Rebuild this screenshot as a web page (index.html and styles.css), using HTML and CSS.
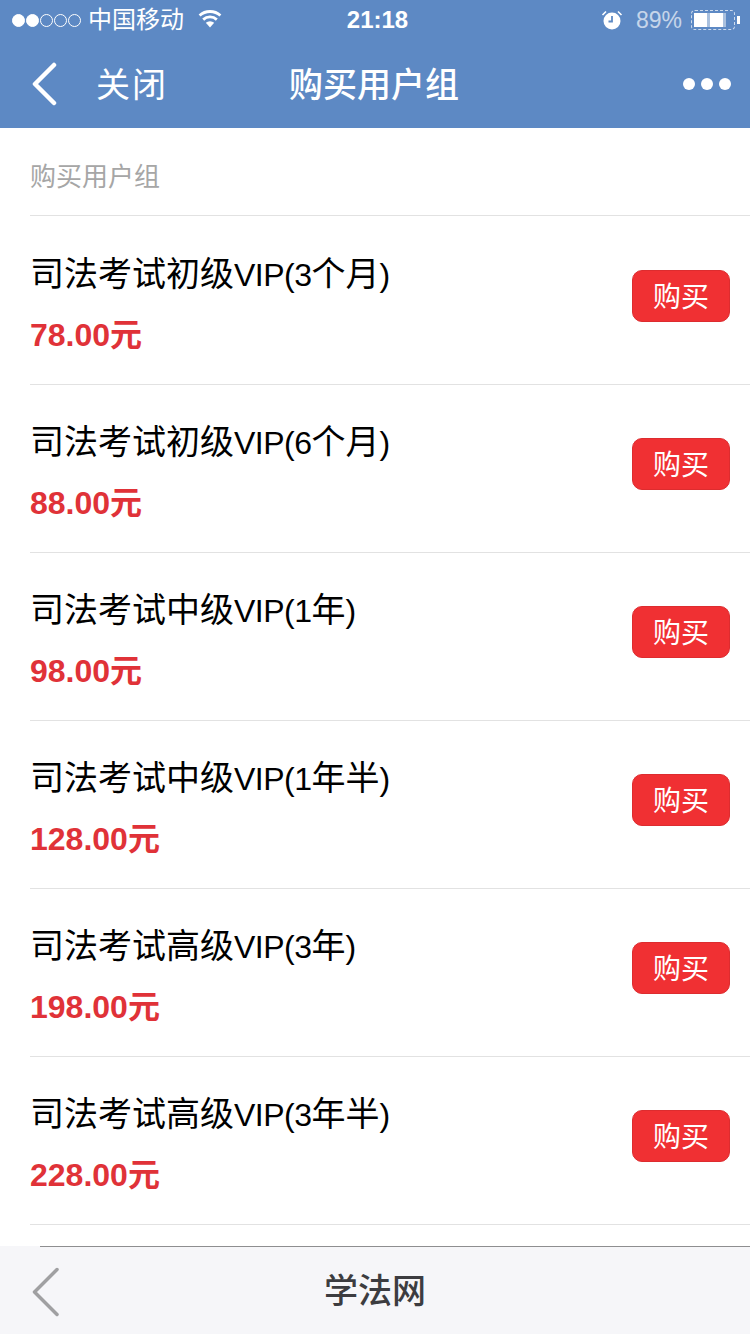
FILE: index.html
```html
<!DOCTYPE html>
<html lang="zh-CN">
<head>
  <meta charset="UTF-8">
  <meta name="viewport" content="width=device-width, initial-scale=1.0">
  <title>购买用户组</title>
  <link rel="stylesheet" href="styles.css">
</head>
<body>
  <div class="app">
    <header class="top-bar">
      <!-- Status bar -->
      <div class="status-bar">
        <div class="status-left">
          <span class="signal">
            <i class="dot on"></i><i class="dot on"></i><i class="dot"></i><i class="dot"></i><i class="dot"></i>
          </span>
          <span class="carrier">中国移动</span>
          <svg class="wifi" width="24" height="18" viewBox="0 0 24 18">
            <path d="M12 17.500 7.800 12.800a6.200 6.200 0 0 1 8.400 0z" fill="#fff"/>
            <path d="M5.200 9.600a10 10 0 0 1 13.600 0M1.600 5.600a15.200 15.200 0 0 1 20.800 0" fill="none" stroke="#fff" stroke-width="2.800"/>
          </svg>
        </div>
        <div class="status-time">21:18</div>
        <div class="status-right">
          <svg class="alarm" width="22" height="22" viewBox="0 0 22 22">
            <circle cx="11" cy="12" r="8.500" fill="#fff"/>
            <path d="M11 7v5.500H7.500" fill="none" stroke="#5d89c4" stroke-width="1.800"/>
            <path d="M1.500 6 5 2.500M20.500 6 17 2.500" fill="none" stroke="#fff" stroke-width="1.600"/>
          </svg>
          <span class="battery-text">89%</span>
          <span class="battery"><i class="battery-fill"></i></span>
          <i class="battery-nub"></i>
        </div>
      </div>

      <!-- Nav bar -->
      <nav class="nav-bar">
        <div class="nav-left">
          <svg class="nav-back" width="26" height="44" viewBox="0 0 26 44">
            <path d="M23 3 4 22l19 19" fill="none" stroke="#fff" stroke-width="4.500" stroke-linecap="round" stroke-linejoin="round"/>
          </svg>
          <span class="nav-close">关闭</span>
        </div>
        <div class="nav-title">购买用户组</div>
        <div class="nav-more"><i></i><i></i><i></i></div>
      </nav>
    </header>

    <main class="content">
      <h2 class="section-title">购买用户组</h2>
      <ul class="plan-list">
        <li class="plan">
          <div class="plan-info">
            <div class="plan-name">司法考试初级<span class="latin">VIP(3</span>个月<span class="latin">)</span></div>
            <div class="plan-price">78.00元</div>
          </div>
          <button class="buy-btn">购买</button>
        </li>
        <li class="plan">
          <div class="plan-info">
            <div class="plan-name">司法考试初级<span class="latin">VIP(6</span>个月<span class="latin">)</span></div>
            <div class="plan-price">88.00元</div>
          </div>
          <button class="buy-btn">购买</button>
        </li>
        <li class="plan">
          <div class="plan-info">
            <div class="plan-name">司法考试中级<span class="latin">VIP(1</span>年<span class="latin">)</span></div>
            <div class="plan-price">98.00元</div>
          </div>
          <button class="buy-btn">购买</button>
        </li>
        <li class="plan">
          <div class="plan-info">
            <div class="plan-name">司法考试中级<span class="latin">VIP(1</span>年半<span class="latin">)</span></div>
            <div class="plan-price">128.00元</div>
          </div>
          <button class="buy-btn">购买</button>
        </li>
        <li class="plan">
          <div class="plan-info">
            <div class="plan-name">司法考试高级<span class="latin">VIP(3</span>年<span class="latin">)</span></div>
            <div class="plan-price">198.00元</div>
          </div>
          <button class="buy-btn">购买</button>
        </li>
        <li class="plan">
          <div class="plan-info">
            <div class="plan-name">司法考试高级<span class="latin">VIP(3</span>年半<span class="latin">)</span></div>
            <div class="plan-price">228.00元</div>
          </div>
          <button class="buy-btn">购买</button>
        </li>
      </ul>
    </main>

    <footer class="bottom-bar">
      <svg class="bottom-back" width="32" height="54" viewBox="0 0 32 54">
        <path d="M27 4.500 4.500 27 27 49.500" fill="none" stroke="#a0a0a2" stroke-width="3.500" stroke-linecap="round" stroke-linejoin="round"/>
      </svg>
      <div class="bottom-title">学法网</div>
    </footer>
  </div>
</body>
</html>
```

FILE: styles.css
```css
* {
  margin: 0;
  padding: 0;
  box-sizing: border-box;
}

body {
  font-family: "Liberation Sans", "Noto Sans CJK SC", sans-serif;
  background-color: #fff;
}

.app {
  width: 750px;
  height: 1334px;
  display: flex;
  flex-direction: column;
  overflow: hidden;
}

/* top */
.top-bar {
  height: 128px;
  background-color: #5d89c4;
  color: #fff;
}

.status-bar {
  height: 40px;
  padding: 0 10px 0 12px;
  display: grid;
  grid-template-columns: 1fr auto 1fr;
  align-items: center;
}

.status-left {
  display: flex;
  align-items: center;
}

.signal {
  display: flex;
  gap: 1px;
  margin-right: 9px;
}

.dot {
  width: 13px;
  height: 13px;
  border: 1.5px solid #fff;
  border-radius: 50%;
}

.dot.on {
  background-color: #fff;
}

.carrier {
  font-size: 24px;
  line-height: 36px;
  margin-right: 14px;
  margin-left: -2px;
}

.wifi {
  margin-bottom: 2px;
}

.status-time {
  font-size: 24px;
  font-weight: bold;
  padding-left: 3px;
}

.status-right {
  display: flex;
  justify-content: flex-end;
  align-items: center;
}

.alarm {
  margin-right: 13px;
}

/* battery area is broken up in the screenshot, hence the faded text and dashes */
.battery-text {
  font-size: 23px;
  margin-right: 9px;
  opacity: 0.65;
}

.battery {
  width: 44px;
  height: 20px;
  padding: 2px;
  border: 1.5px dashed rgba(255, 255, 255, 0.7);
  border-radius: 4px;
}

.battery-fill {
  display: block;
  width: 85%;
  height: 100%;
  background: repeating-linear-gradient(90deg, #fff 0, #fff 13px, #a9c0de 13px, #a9c0de 16px);
}

.battery-nub {
  width: 3px;
  height: 8px;
  margin-left: 2px;
  background-color: #fff;
}

.nav-bar {
  height: 88px;
  padding: 0 19px 4px 31px;
  display: grid;
  grid-template-columns: 258px 170px 1fr;
  align-items: center;
}

.nav-left {
  display: flex;
  align-items: center;
  gap: 39px;
}

.nav-back {
  margin-top: 4px;
}

.nav-close {
  font-size: 34px;
  letter-spacing: 2px;
}

.nav-title {
  font-size: 34px;
  font-weight: 500;
}

.nav-more {
  display: flex;
  justify-content: flex-end;
  gap: 6px;
  margin-top: 4px;
}

.nav-more i {
  width: 12px;
  height: 12px;
  border-radius: 50%;
  background-color: #fff;
}

/* list */
.content {
  flex: 1;
  padding-left: 30px;
}

.section-title {
  height: 88px;
  padding-top: 33px;
  font-size: 26px;
  line-height: 32px;
  font-weight: normal;
  color: #a6a6a6;
  border-bottom: 1px solid #e2e2e2;
}

.plan-list {
  list-style: none;
  padding-top: 1px;
}

.plan {
  height: 168px;
  padding: 0 20px 0 0;
  display: flex;
  justify-content: space-between;
  align-items: center;
  border-bottom: 1px solid #e2e2e2;
}

.plan-info {
  padding-top: 7px;
}

.plan-name {
  font-size: 34px;
  line-height: 40px;
  color: #000;
}

.latin {
  font-size: 32px;
  letter-spacing: -0.5px;
}

.plan-price {
  margin-top: 20px;
  font-size: 32px;
  line-height: 40px;
  font-weight: bold;
  color: #e03238;
}

.buy-btn {
  width: 98px;
  height: 52px;
  margin-bottom: 10px;
  padding-bottom: 2px;
  font-family: inherit;
  font-size: 28px;
  color: #fff;
  background-color: #f03033;
  border: 1px solid #dd2c2f;
  border-radius: 10px;
}

/* bottom */
.bottom-bar {
  height: 88px;
  padding-left: 30px;
  position: relative;
  display: flex;
  align-items: center;
  background-color: #f6f6f9;
}

.bottom-bar::before {
  content: "";
  position: absolute;
  top: 0;
  left: 40px;
  right: 0;
  height: 1px;
  background-color: #8e8e90;
}

.bottom-back {
  margin-top: 4px;
}

.bottom-title {
  position: absolute;
  left: 0;
  right: 0;
  padding-bottom: 4px;
  text-align: center;
  font-size: 34px;
  font-weight: 500;
  color: #3c3c40;
}
```
